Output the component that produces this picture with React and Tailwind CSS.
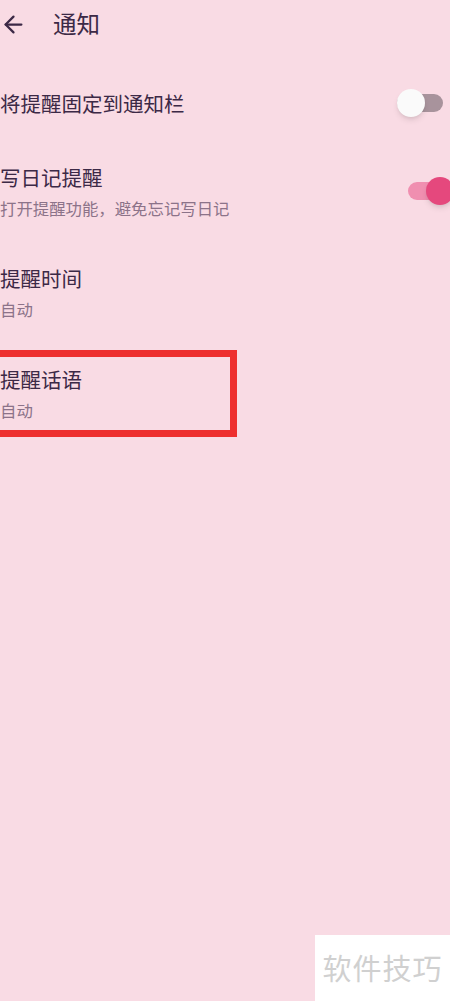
import { ArrowLeft } from "lucide-react";

const font = { fontFamily: '"Noto Sans CJK SC", "Noto Sans", sans-serif' };

function Toggle({ on }) {
  return on ? (
    <div className="relative h-[18px] w-[46px]">
      <div className="absolute left-0 top-0 h-[18px] w-[46px] rounded-full bg-[#f08fb0]" />
      <div className="absolute left-[18px] top-[-5px] h-[28px] w-[28px] rounded-full bg-[#e5487d] shadow-md" />
    </div>
  ) : (
    <div className="relative h-[18px] w-[46px]">
      <div className="absolute left-0 top-0 h-[18px] w-[46px] rounded-full bg-[#a8939c]" />
      <div className="absolute left-0 top-[-5px] h-[28px] w-[28px] rounded-full bg-[#fafafa] shadow-md" />
    </div>
  );
}

function Row({ title, sub, toggle, className = "" }) {
  return (
    <div className={`flex items-center justify-between ${className}`}>
      <div className="flex flex-col">
        <span className="text-[20.5px] leading-[26px] text-[#3c2946]">{title}</span>
        {sub && <span className="mt-[8px] text-[16.4px] leading-[20px] text-[#8c7389]">{sub}</span>}
      </div>
      {toggle}
    </div>
  );
}

export default function App() {
  return (
    <div className="relative h-[1001px] w-[450px] overflow-hidden bg-[#f9dbe4]" style={font}>
      <div className="flex h-[48px] items-center">
        <ArrowLeft size={27} strokeWidth={2} className="ml-[0px] text-[#3c2946]" />
        <span className="ml-[26px] text-[23.5px] text-[#3c2946]">通知</span>
      </div>

      <Row className="mt-[42px] pr-[7px]" title="将提醒固定到通知栏" toggle={<Toggle on={false} />} />
      <Row className="mt-[48px]" title="写日记提醒" sub="打开提醒功能，避免忘记写日记" toggle={<div className="-mr-[4px]"><Toggle on /></div>} />
      <Row className="mt-[47px]" title="提醒时间" sub="自动" />
      <Row className="mt-[47px]" title="提醒话语" sub="自动" />

      <div className="absolute left-[-10px] top-[350px] h-[87px] w-[247px] border-[7px] border-[#ee2f2f]" />

      <div className="absolute left-[315px] top-[935px] flex h-[66px] w-[135px] items-center justify-center bg-white">
        <span className="text-[29px] tracking-[1px] text-[#d0d0d0]">软件技巧</span>
      </div>
    </div>
  );
}
